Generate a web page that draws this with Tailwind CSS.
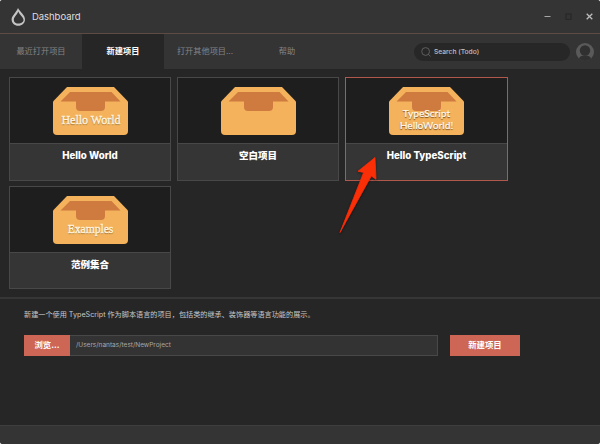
<!DOCTYPE html>
<html lang="zh-CN">
<head>
<meta charset="utf-8">
<title>Dashboard</title>
<script src="https://cdn.jsdelivr.net/npm/@tailwindcss/browser@4"></script>
</head>
<body class="bg-[#e8e8e8] font-[Inter,'Noto_Sans_CJK_SC',sans-serif]">
<svg class="hidden">
  <symbol id="box" viewBox="0 0 75 48">
    <path fill="#f3b25b" d="M14 0H61L75 14.500V44a4 4 0 0 1-4 4H4a4 4 0 0 1-4-4V14.500Z"/>
    <path fill="#cf7b40" d="M17 5H58.500L67.500 14.500H52V20a4 4 0 0 1-4 4H27a4 4 0 0 1-4-4V14.500H7.500Z"/>
  </symbol>
</svg>
<div class="relative flex h-[444px] w-[600px] flex-col overflow-hidden rounded-[3px] bg-[#262626]">
  <header class="flex h-[34px] shrink-0 items-center border-b border-[#5d4a42] bg-[#343435] pl-[11px] pr-[7px]">
    <svg class="h-[18px] w-[15px]" viewBox="0 0 15 18">
      <path fill="#c4c4c4" fill-rule="evenodd" d="M7 0C9 4 14 7 14 11.500C14 15 11 17.800 7.300 17.800C3.500 17.800 .6 15 .6 11.500C.6 7.500 5 5 7 0ZM7.300 3.500C6 7 2.600 9 2.800 12C3 14.600 5 15.600 7.500 15.600C10 15.600 12.500 14.200 12.500 12C12.500 9 8.600 7 7.300 3.500Z"/>
    </svg>
    <h1 class="ml-[6px] text-[9.500px] leading-4 tracking-[-0.05px] text-[#dedede]">Dashboard</h1>
    <div class="ml-auto flex items-center gap-[14px]">
      <svg class="h-[7px] w-[7px]" viewBox="0 0 7 7"><path stroke="#a6a6a6" stroke-width="1.200" d="M.5 3.500h6"/></svg>
      <svg class="h-[7px] w-[7px]" viewBox="0 0 7 7"><rect x="1" y="1" width="5" height="5.500" fill="none" stroke="#272727" stroke-width="1.100"/></svg>
      <svg class="h-[7px] w-[7px]" viewBox="0 0 7 7"><path stroke="#bcbcbc" stroke-width="1.300" d="M.7.7l5.600 5.600M6.300.7L.7 6.300"/></svg>
    </div>
  </header>

  <nav class="flex h-[35px] shrink-0 items-center bg-[#343435] text-[8.200px] text-[#858585]">
    <div class="flex h-full w-[82px] items-center justify-center">最近打开项目</div>
    <div class="flex h-full w-[82px] items-center justify-center bg-[#262626] font-bold text-white">新建项目</div>
    <div class="flex h-full w-[82px] items-center justify-center">打开其他项目...</div>
    <div class="flex h-full w-[82px] items-center justify-center">帮助</div>
    <div class="ml-auto flex h-[18px] w-[156px] items-center rounded-full bg-[#272728] pl-[7px] text-[6.700px] font-medium text-[#c0c0c0]">
      <svg class="mr-[3px] h-[10px] w-[10px]" viewBox="0 0 10 10" fill="none" stroke="#646464" stroke-width=".9"><circle cx="4.600" cy="4.500" r="3.900"/><path d="M7.400 7.300L9.600 9.500"/></svg>
      <span class="relative top-[0.5px]">Search (Todo)</span>
    </div>
    <svg class="ml-[6px] mr-[6px] h-[18px] w-[18px]" viewBox="0 0 18 18">
      <circle cx="9" cy="9" r="9" fill="#5a5a5a"/>
      <circle cx="9" cy="7.500" r="5.200" fill="#303031"/>
      <path fill="#303031" d="M3 15.700C3.500 13.500 5.500 12.500 9 12.500S14.500 13.500 15 15.700A9 9 0 0 1 3 15.700Z"/>
    </svg>
  </nav>

  <main class="grid h-[228px] shrink-0 grid-cols-[162px_162px_162px] content-start gap-x-[6px] gap-y-[5px] pl-[9px] pt-[8px] text-[9.700px] font-extrabold text-white">
    <article class="flex h-[104px] flex-col border border-[#484849] bg-[#353536]">
      <div class="relative flex h-[66px] shrink-0 justify-center border-b border-[#484849] bg-[#1e1e1e] pt-[9px]">
        <svg class="h-[48px] w-[75px]"><use href="#box"/></svg>
        <span class="absolute inset-x-0 top-[35px] pl-[2px] text-center font-['Liberation_Serif',serif] text-[12px] font-normal leading-[15px] text-[#fff3df] [-webkit-text-stroke:0.4px_#fff3df] [text-shadow:0_1px_1px_#8b5a20]">Hello World</span>
      </div>
      <h2 class="pt-[4px] text-center leading-[15px]">Hello World</h2>
    </article>
    <article class="flex h-[104px] flex-col border border-[#484849] bg-[#353536]">
      <div class="flex h-[66px] shrink-0 justify-center border-b border-[#484849] bg-[#1e1e1e] pt-[9px]">
        <svg class="h-[48px] w-[75px]"><use href="#box"/></svg>
      </div>
      <h2 class="pt-[4px] text-center text-[9.500px] leading-[15px]">空白项目</h2>
    </article>
    <article class="flex h-[104px] w-[163px] flex-col border border-[#b0584c] bg-[#353536]">
      <div class="relative flex h-[66px] shrink-0 justify-center border-b border-[#484849] bg-[#1e1e1e] pt-[9px]">
        <svg class="h-[48px] w-[75px]"><use href="#box"/></svg>
        <span class="absolute inset-x-0 top-[29px] text-center font-[Lato,sans-serif] text-[10.200px] font-medium leading-[12px] text-[#fff9ef] [-webkit-text-stroke:0.2px_#fff9ef] [text-shadow:0_1px_1px_#70451a]">TypeScript<br>HelloWorld!</span>
      </div>
      <h2 class="pt-[4px] text-center leading-[15px]">Hello TypeScript</h2>
    </article>
    <article class="flex h-[103px] flex-col border border-[#484849] bg-[#353536]">
      <div class="relative flex h-[66px] shrink-0 justify-center border-b border-[#484849] bg-[#1e1e1e] pt-[9px]">
        <svg class="h-[48px] w-[75px]"><use href="#box"/></svg>
        <span class="absolute inset-x-0 top-[35px] pl-px text-center font-['Liberation_Serif',serif] text-[11.600px] font-normal leading-[15px] text-[#fff3df] [-webkit-text-stroke:0.4px_#fff3df] [text-shadow:0_1px_1px_#8b5a20]">Examples</span>
      </div>
      <h2 class="pt-[4px] text-center text-[9.500px] leading-[15px]">范例集合</h2>
    </article>
  </main>

  <section class="grow border-t-2 border-[#363636] pl-[24px] pt-[8px]">
    <p class="whitespace-nowrap text-[7.150px] leading-[16px] text-[#c8c8c8]">新建一个使用 TypeScript 作为脚本语言的项目，包括类的继承、装饰器等语言功能的展示。</p>
    <div class="mt-[12px] flex h-[21px] text-[8.400px] font-bold text-white">
      <button class="w-[46px] bg-[#cd6655]">浏览...</button>
      <div class="flex w-[368px] items-center border border-l-0 border-[#484848] bg-[#333] pl-[6px] text-[6.500px] font-normal text-[#a8a8a8]"><span class="relative top-[0.5px]">/Users/nantas/test/NewProject</span></div>
      <button class="ml-[12px] w-[70px] bg-[#cd6655]">新建项目</button>
    </div>
  </section>

  <footer class="h-[19px] shrink-0 border-t border-[#3e3e3e] bg-[#343435]"></footer>

  <svg class="absolute left-[335px] top-[152px] h-[86px] w-[48px] drop-shadow-[0_1px_1px_rgba(0,0,0,0.5)]" viewBox="0 0 48 86">
    <path fill="#fb2f07" stroke="#fb2f07" stroke-width=".8" stroke-linejoin="round" d="M40 5.500L23 19.300L28.600 20.500L5 80.500L36.300 24L41 27.300Z"/>
  </svg>
</div>
</body>
</html>
